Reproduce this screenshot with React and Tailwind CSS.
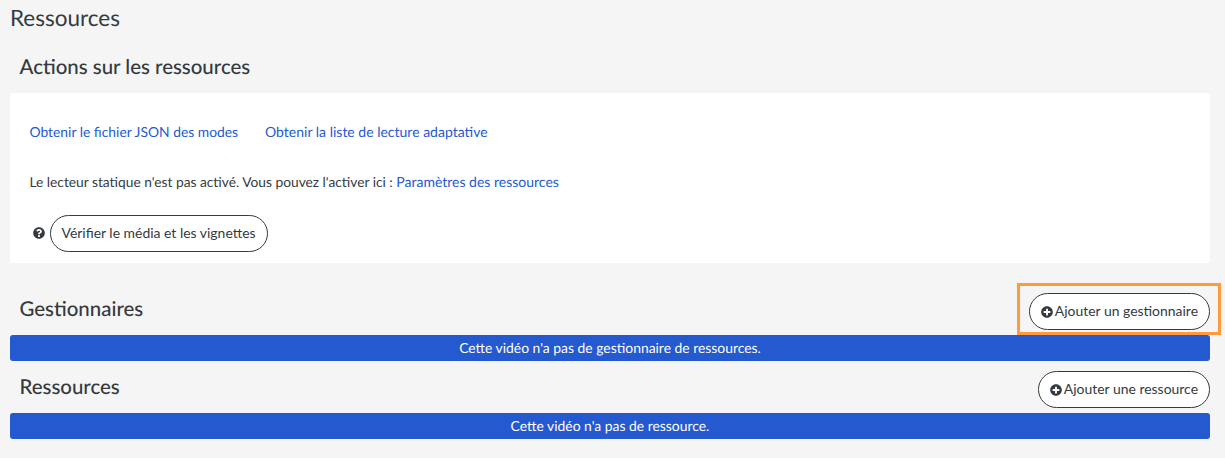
import React from 'react';
import { FaPlusCircle, FaQuestionCircle } from 'react-icons/fa';

function PillButton({ children }) {
  return (
    <button className="h-[37px] px-[11px] flex items-center bg-white border border-[#343a40] rounded-[18.5px] text-[13.95px] text-[#343a40] whitespace-nowrap">
      {children}
    </button>
  );
}

function AddButton({ label }) {
  return (
    <PillButton>
      <FaPlusCircle className="w-[12px] h-[12px] mr-[2px] text-[#343a40]" />
      <span>{label}</span>
    </PillButton>
  );
}

function Banner({ children }) {
  return (
    <div className="h-[26px] bg-[#2459d0] rounded-[3px] flex items-center justify-center text-white text-[13.9px]">
      {children}
    </div>
  );
}

export default function App() {
  return (
    <div className="relative h-[458px] overflow-hidden bg-[#f5f5f5] pl-[10px] pr-[15px] text-[13.85px] text-[#343a40] [text-rendering:geometricPrecision] font-['Lato','Liberation_Sans',sans-serif]">
      <h1 className="pt-[3px] h-[39px] text-[22.5px] leading-[29px]">Ressources</h1>

      <h2 className="pl-[9.5px] pt-[15px] h-[54px] text-[20.45px] leading-[26px] font-medium">Actions sur les ressources</h2>

      <div className="h-[170px] bg-white rounded-[3px] px-[19.5px] pt-[30px]">
        <div className="flex gap-[27px] h-[18px] leading-[18px] text-[#2459d0]">
          <a>Obtenir le fichier JSON des modes</a>
          <a className="text-[14px]">Obtenir la liste de lecture adaptative</a>
        </div>
        <p className="mt-[32px] h-[18px] leading-[18px] text-[13.75px]">
          Le lecteur statique n'est pas activé. Vous pouvez l'activer ici : <a className="text-[14px] text-[#2459d0]">Paramètres des ressources</a>
        </p>
        <div className="mt-[24px] flex items-center pl-[3px] gap-[5px]">
          <FaQuestionCircle className="w-[12px] h-[12px] -mt-[2px] text-[#343a40]" />
          <PillButton>Vérifier le média et les vignettes</PillButton>
        </div>
      </div>

      <div className="mt-[21px] flex items-end justify-between h-[51px] pb-[5px]">
        <h2 className="pl-[9.5px] pb-[8px] text-[20.45px] leading-[26px] font-medium">Gestionnaires</h2>
        <AddButton label="Ajouter un gestionnaire" />
      </div>
      <Banner>Cette vidéo n'a pas de gestionnaire de ressources.</Banner>

      <div className="flex items-end justify-between h-[52px] pb-[5px]">
        <h2 className="pl-[9.5px] pb-[8px] text-[20.45px] leading-[26px] font-medium">Ressources</h2>
        <AddButton label="Ajouter une ressource" />
      </div>
      <Banner>Cette vidéo n'a pas de ressource.</Banner>

      {/* highlight around the add button */}
      <div className="absolute left-[1017px] top-[283px] w-[204px] h-[52px] border-[3px] border-[#ff9b3d] pointer-events-none" />
    </div>
  );
}
